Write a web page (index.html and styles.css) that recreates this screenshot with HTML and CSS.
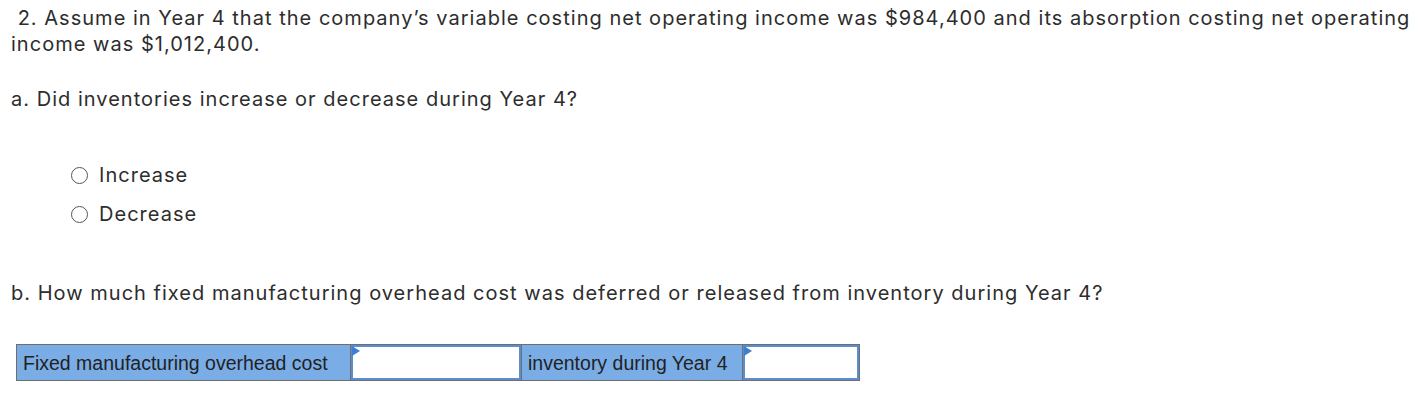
FILE: index.html
```html
<!DOCTYPE html>
<html>
<head>
<meta charset="utf-8">
<link rel="stylesheet" href="styles.css">
</head>
<body>
<div class="page">
  <p class="q">&nbsp;2. Assume in Year 4 that the company’s variable costing net operating income was $984,400 and its absorption costing net operating income was $1,012,400.</p>
  <p class="sub sub-a">a. Did inventories increase or decrease during Year 4?</p>
  <div class="choices">
    <label class="choice"><span class="radio"></span><span>Increase</span></label>
    <label class="choice"><span class="radio"></span><span>Decrease</span></label>
  </div>
  <p class="sub sub-b">b. How much fixed manufacturing overhead cost was deferred or released from inventory during Year 4?</p>
  <div class="grid">
    <div class="cell label l1">Fixed manufacturing overhead cost</div>
    <div class="cell input i1"><span class="flag"></span></div>
    <div class="cell label l2">inventory during Year 4</div>
    <div class="cell input i2"><span class="flag"></span></div>
  </div>
</div>
</body>
</html>
```

FILE: styles.css
```css
html, body {
  margin: 0;
  padding: 0;
  background: #fff;
}
.page {
  padding: 5px 0 0 11px;
  font-family: "Inter", "Open Sans", sans-serif;
  font-size: 20px;
  line-height: 26px;
  letter-spacing: 1.02px;
  color: #2d2d2d;
}
.q {
  margin: 0;
  width: 1414px;
}
.sub {
  margin: 0;
}
.sub-a {
  margin-top: 29px;
}
.choices {
  display: flex;
  flex-direction: column;
  gap: 13px;
  margin-top: 50px;
  padding-left: 60px;
}
.choice {
  display: flex;
  align-items: center;
  gap: 11px;
}
.radio {
  width: 15px;
  height: 15px;
  border: 1px solid #555;
  border-radius: 50%;
  box-sizing: content-box;
}
.sub-b {
  margin-top: 53px;
}
.grid {
  display: flex;
  margin-top: 38px;
  margin-left: 5px;
  width: 844px;
  height: 37px;
  border: 1px solid #6e6e6e;
  box-sizing: border-box;
  font-family: "Liberation Sans", Arial, sans-serif;
  font-size: 19.5px;
  letter-spacing: 0;
  color: #222;
}
.cell {
  box-sizing: border-box;
  height: 100%;
}
.label {
  background: #7aade6;
  padding-left: 6px;
  display: flex;
  align-items: center;
}
.l1 { width: 333px; }
.l2 { width: 221px; border-left: 1px solid #6e6e6e; }
.input {
  position: relative;
  background: #fff;
  border-left: 1px solid #6e6e6e;
  box-shadow: inset 0 0 0 2px #5b8dd3;
}
.i1 { width: 171px; }
.i2 { flex: 1; }
.flag {
  position: absolute;
  left: 1px;
  top: 1px;
  width: 0;
  height: 0;
  border-top: 5px solid transparent;
  border-bottom: 5px solid transparent;
  border-left: 8px solid #3d7fd0;
}
```
